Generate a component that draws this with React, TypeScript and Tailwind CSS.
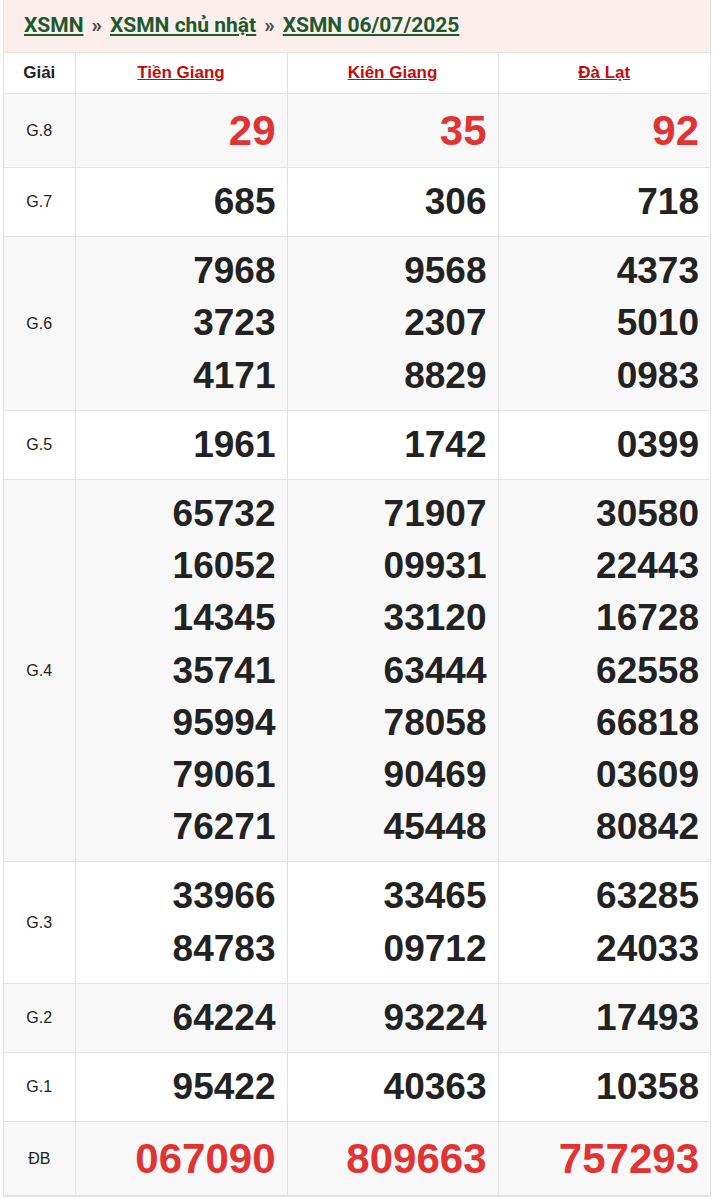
import React from 'react';

type Row = { label: string; values: string[][]; red?: boolean };

const rows: Row[] = [
  { label: 'G.8', values: [['29'], ['35'], ['92']], red: true },
  { label: 'G.7', values: [['685'], ['306'], ['718']] },
  { label: 'G.6', values: [['7968', '3723', '4171'], ['9568', '2307', '8829'], ['4373', '5010', '0983']] },
  { label: 'G.5', values: [['1961'], ['1742'], ['0399']] },
  {
    label: 'G.4',
    values: [
      ['65732', '16052', '14345', '35741', '95994', '79061', '76271'],
      ['71907', '09931', '33120', '63444', '78058', '90469', '45448'],
      ['30580', '22443', '16728', '62558', '66818', '03609', '80842'],
    ],
  },
  { label: 'G.3', values: [['33966', '84783'], ['33465', '09712'], ['63285', '24033']] },
  { label: 'G.2', values: [['64224'], ['93224'], ['17493']] },
  { label: 'G.1', values: [['95422'], ['40363'], ['10358']] },
  { label: 'ĐB', values: [['067090'], ['809663'], ['757293']], red: true },
];

const provinces = ['Tiền Giang', 'Kiên Giang', 'Đà Lạt'];

const App: React.FC = () => {
  return (
    <div className="bg-white min-h-[1199px] font-['Liberation_Sans',Arial,sans-serif]">
      <div className="ml-[3px] w-[708px] border-x border-b-2 border-[#e2e2e2]">
        <div className="h-[52px] bg-[#fdeeee] flex items-center pl-[20px] text-[21px] font-bold font-['Roboto',sans-serif]">
          <a href="#" className="text-[#1c5a2d] underline">XSMN</a>
          <span className="mx-[8px] text-[#444]">»</span>
          <a href="#" className="text-[#1c5a2d] underline">XSMN chủ nhật</a>
          <span className="mx-[8px] text-[#444]">»</span>
          <a href="#" className="text-[#1c5a2d] underline">XSMN 06/07/2025</a>
        </div>
        <table className="w-full table-fixed border-collapse">
          <colgroup>
            <col className="w-[71px]" />
            <col className="w-[212px]" />
            <col className="w-[211px]" />
            <col className="w-[212px]" />
          </colgroup>
          <thead>
            <tr className="h-[41px] bg-white">
              <th className="border-r border-t border-[#e2e2e2] text-[17px] font-bold text-[#222]">Giải</th>
              {provinces.map((p) => (
                <th key={p} className="border-r last:border-r-0 border-t border-[#e2e2e2] text-[17px] font-bold">
                  <a href="#" className="text-[#c40c0c] underline">{p}</a>
                </th>
              ))}
            </tr>
          </thead>
          <tbody>
            {rows.map((r, i) => (
              <tr key={r.label} className={i % 2 === 0 ? 'bg-[#f8f8f8]' : 'bg-white'}>
                <td className="border-r border-t border-[#e2e2e2] text-center text-[16px] text-[#222]">{r.label}</td>
                {r.values.map((col, j) => (
                  <td
                    key={j}
                    className={
                      'border-r border-t border-[#e2e2e2] text-right pr-[11px] py-[8px] font-bold ' +
                      (j === 2 ? 'border-r-0 ' : '') +
                      (r.red
                        ? 'text-[42px] leading-[57px] text-[#e03434]'
                        : 'text-[37px] leading-[52.2px] text-[#222]')
                    }
                  >
                    {col.map((v) => (
                      <div key={v}>{v}</div>
                    ))}
                  </td>
                ))}
              </tr>
            ))}
          </tbody>
        </table>
      </div>
    </div>
  );
};

export default App;
